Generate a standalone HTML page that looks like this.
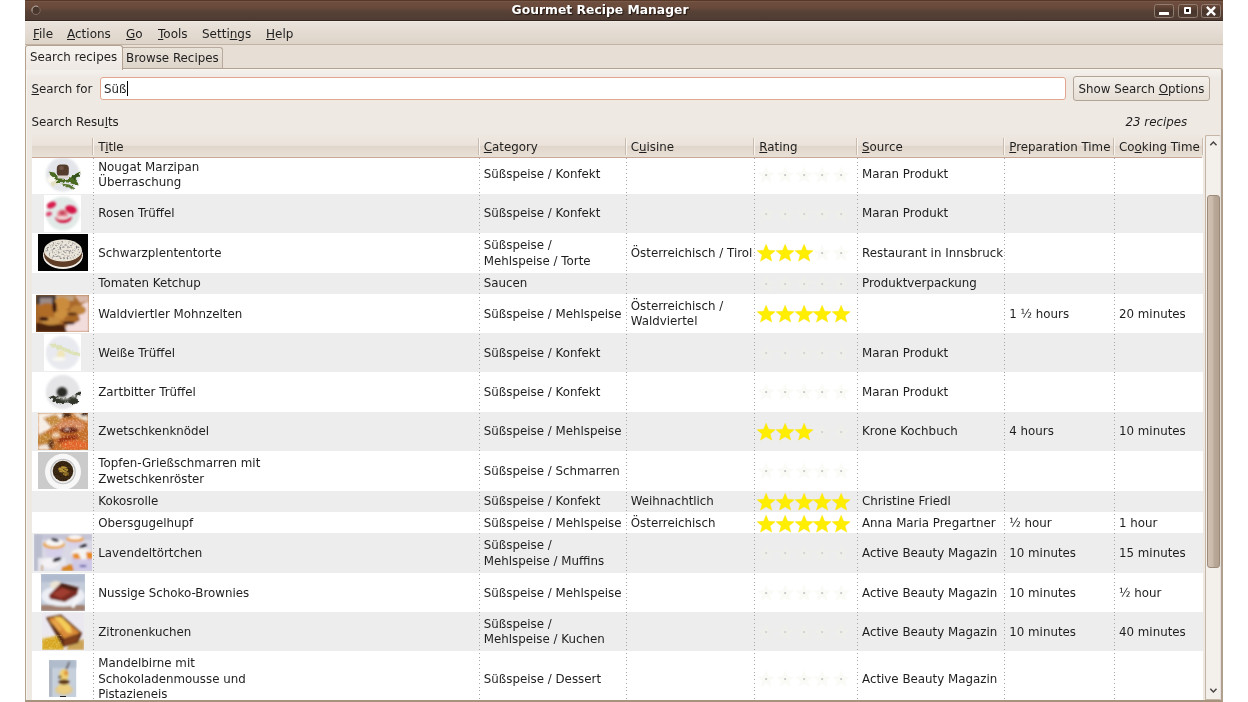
<!DOCTYPE html>
<html><head><meta charset="utf-8"><title>Gourmet Recipe Manager</title>
<style>
*{box-sizing:border-box;margin:0;padding:0}
html,body{width:1248px;height:702px;overflow:hidden;background:#fff}
body{font-family:"DejaVu Sans","Liberation Sans",sans-serif;font-size:11.85px;color:#1e1e1e;position:relative;-webkit-font-smoothing:antialiased}
#all{left:0;top:0;width:1248px;height:702px;will-change:transform}
u{text-decoration:underline;text-underline-offset:1px;text-decoration-thickness:1px}
div,span,svg{position:absolute}
#titlebar{left:25px;top:0;width:1198px;height:21px;background:linear-gradient(#573828 0,#573828 1px,#7b5b49 1px,#6d4e3e 2.5px,#69493a 8px,#584237 11px,#4f3c33 19.5px,#35261f 20px,#35261f 21px)}
#title{left:486.6px;top:2.5px;white-space:nowrap;font-size:12.35px;color:#fff;font-weight:bold;text-shadow:1px 1px 1px #1e130d;line-height:15px}
#menubar{left:25px;top:21px;width:1198px;height:24px;background:linear-gradient(#f3eee9 0,#eae3db 1.5px,#ddd3c8);border-bottom:1px solid #c3b3a3}
#menubar span{top:5.5px;line-height:15px;font-size:12px}
#tabstrip{left:25px;top:45px;width:1198px;height:24px;background:#e7dfd5}
#page{left:25px;top:68px;width:1198px;height:634px;background:linear-gradient(#f5f2ee 0,#efe9e4 9px);border:1px solid #b3a291;box-shadow:inset 1px 1px 0 #f8f5f1;border-right:2px solid #b09f8c;border-bottom:2.2px solid #a6937d;border-radius:0 3px 0 0}
#tab1{left:25px;top:45px;width:98px;height:25px;background:linear-gradient(#f6f3ef,#efe9e4);border:1px solid #b3a291;border-bottom:none;border-radius:3px 3px 0 0}
#tab2{left:122px;top:47px;width:101px;height:21px;background:linear-gradient(#e9e2d9,#ded5ca);border:1px solid #b9aa9b;border-left:none;border-bottom:none;border-radius:0 3px 0 0}
.wb{top:4px;width:20px;height:14px;border:1px solid #8f7b70;border-radius:2.5px;background:linear-gradient(#6a4a3a,#47342b 55%,#503c32)}
.tl{line-height:15px;white-space:nowrap}
#entry{left:100px;top:77px;width:966px;height:23px;background:#fff;border:1px solid #e2a68e;border-radius:3px}
#btn{left:1073px;top:76px;width:137px;height:25px;border:1px solid #b3a596;border-radius:3px;background:linear-gradient(#f4f0eb,#e6ded5)}
#thead{z-index:3;left:32px;top:135px;width:1170px;height:23px;background:linear-gradient(#eee8e1 0,#ebe3db 46%,#e1d6cb 52%,#e9e0d7 100%);border-bottom:1px solid #c9a796}
.hs{top:3px;width:2px;height:17px;border-left:1px solid #c9bcae;border-right:1px solid #f8f5f1}
.ht{top:5px;line-height:15px;white-space:nowrap}
#tbody{left:32px;top:158px;width:1170.5px;height:542px;background:#fff}
.rg{left:32px;width:1170.5px;background:#ededed}
.c{line-height:15.5px;white-space:nowrap}
.vl{top:158px;width:1px;height:542px;background:repeating-linear-gradient(#a6a6a6 0,#a6a6a6 1px,transparent 1px,transparent 3.75px)}
#sbar{left:1204.7px;top:135px;width:16.6px;height:565px;background:#f3efea;border:1px solid #c6b6a6;border-right-color:#e6e1dc;border-radius:2px 2px 0 0}
#thumb{left:1207px;top:195px;width:13px;height:373px;border:1px solid #9c8b7b;border-radius:3px;background:linear-gradient(90deg,#d0c1b3 0,#c9b9aa 46%,#b9a999 54%,#b3a292 100%)}
</style></head><body>
<svg width="0" height="0" style="position:absolute"><defs>
<filter id="b0" x="-20%" y="-20%" width="140%" height="140%"><feGaussianBlur stdDeviation="0.45"/></filter>
<filter id="b1" x="-20%" y="-20%" width="140%" height="140%"><feGaussianBlur stdDeviation="0.8"/></filter>
<filter id="b2" x="-20%" y="-20%" width="140%" height="140%"><feGaussianBlur stdDeviation="1.1"/></filter>
<filter id="b3" x="-20%" y="-20%" width="140%" height="140%"><feGaussianBlur stdDeviation="2"/></filter>
<filter id="rg" x="-20%" y="-20%" width="140%" height="140%"><feTurbulence type="fractalNoise" baseFrequency="0.35" numOctaves="2" seed="7" result="t"/><feDisplacementMap in="SourceGraphic" in2="t" scale="3.2" xChannelSelector="R" yChannelSelector="G"/><feGaussianBlur stdDeviation="0.55"/></filter>
<filter id="sp" x="0" y="0" width="100%" height="100%"><feTurbulence type="fractalNoise" baseFrequency="0.55" numOctaves="2" seed="3" result="n"/><feColorMatrix in="n" type="matrix" values="0 0 0 0 0  0 0 0 0 0  0 0 0 0 0  2.2 0 0 0 -1.05" result="m"/><feComposite in="SourceGraphic" in2="m" operator="in"/><feGaussianBlur stdDeviation="0.35"/></filter>
</defs></svg>
<div id="all">
<div id="titlebar"><div id="title">Gourmet Recipe Manager</div>
<svg style="left:5px;top:4px" width="13" height="13" viewBox="0 0 13 13"><circle cx="6" cy="6.3" r="4.2" fill="#49362d" stroke="#7f6b5f" stroke-width="1"/><path d="M2.2 7.5 A4 4 0 0 1 8 2.6" fill="none" stroke="#b3a59b" stroke-width="1"/></svg>
<div class="wb" style="left:1129px"></div><div class="wb" style="left:1153px"></div><div class="wb" style="left:1176px"></div>
<div style="left:1134px;top:11.5px;width:10px;height:3px;background:#fff;border-radius:.5px"></div>
<div style="left:1159px;top:7px;width:7px;height:6.5px;border:2px solid #fff;border-top-width:2.5px;border-radius:1px;background:#1a100c"></div>
<svg style="left:1181px;top:5.5px" width="10" height="10" viewBox="0 0 10 10"><path d="M1.8 1.8 L8.2 8.2 M8.2 1.8 L1.8 8.2" stroke="#fff" stroke-width="2.4" stroke-linecap="square"/></svg>
</div>
<div id="menubar">
  <span style="left:8px"><u>F</u>ile</span>
  <span style="left:42px"><u>A</u>ctions</span>
  <span style="left:101px"><u>G</u>o</span>
  <span style="left:133px"><u>T</u>ools</span>
  <span style="left:177px">Setti<u>n</u>gs</span>
  <span style="left:241px"><u>H</u>elp</span>
</div>
<div id="tabstrip"></div>
<div id="page"></div>
<div id="tab2"></div>
<div id="tab1"></div>
<div class="tl" style="left:30px;top:50px">Search recipes</div>
<div class="tl" style="left:126px;top:51px">Browse Recipes</div>
<div class="tl" style="left:31.5px;top:82px"><u>S</u>earch for</div>
<div id="entry"></div>
<div class="tl" style="left:104px;top:82px">Süß</div>
<div style="left:127.2px;top:80.7px;width:1px;height:15.5px;background:#000"></div>
<div id="btn"></div>
<div class="tl" style="left:1078.5px;top:82px">Show Search <u>O</u>ptions</div>
<div class="tl" style="left:31.5px;top:114.5px">Search Resu<u>l</u>ts</div>
<div class="tl" style="left:1125.5px;top:114.5px;font-style:italic">23 recipes</div>
<div id="thead">
<div class="hs" style="left:60.25px"></div>
<div class="hs" style="left:445.75px"></div>
<div class="hs" style="left:592.75px"></div>
<div class="hs" style="left:721.25px"></div>
<div class="hs" style="left:824px"></div>
<div class="hs" style="left:971.25px"></div>
<div class="hs" style="left:1081px"></div>
<div class="hs" style="left:1169.5px"></div>
<div class="ht" style="left:66.25px">T<u>i</u>tle</div>
<div class="ht" style="left:451.75px"><u>C</u>ategory</div>
<div class="ht" style="left:598.75px">C<u>u</u>isine</div>
<div class="ht" style="left:727.25px"><u>R</u>ating</div>
<div class="ht" style="left:830.00px"><u>S</u>ource</div>
<div class="ht" style="left:977.25px"><u>P</u>reparation Time</div>
<div class="ht" style="left:1087.00px">Co<u>o</u>king Time</div>
</div>
<div id="tbody"></div>
<svg style="left:44px;top:157.07px" width="37" height="37" viewBox="0 0 37 37">
<rect width="37" height="37" fill="#fff"/>
<circle cx="18.8" cy="17.5" r="17" fill="#e4e5ea" filter="url(#b1)"/>
<ellipse cx="9.5" cy="23" rx="7" ry="4.5" fill="#f8f6ee" filter="url(#b2)"/>
<g filter="url(#rg)" transform="translate(1.3 1.6)">
<path d="M3 13 L9 14 L14 19 L22 21.5 L29 16 L35 13 L35 16 L30 20 L34 25 L32 27 L23 24 L14 23.5 L8 27 L6 26 L11 21.5 L5 16.5 Z" fill="#4c6a24"/>
<path d="M26 18.5 L34 14 L35 17 L29 21 Z" fill="#35521a"/>
<path d="M5 24 L11 22 L13 26 L7 28 Z" fill="#e4e0c4"/>
<path d="M16 25 L24 26 L30 30 L28 31 L20 28 Z" fill="#5a7830"/>
</g>
<g filter="url(#b0)">
<rect x="12.8" y="7.5" width="12" height="12" rx="4" fill="#553c2e"/>
<rect x="15" y="9" width="5" height="4" rx="2" fill="#6e5444"/>
<rect x="13.5" y="18.6" width="11" height="2.8" rx="1" fill="#dcd4d0"/>
</g></svg>
<div class="c" style="left:98.25px;top:159.68px">Nougat Marzipan<br>Überraschung</div>
<div class="c" style="left:483.75px;top:167.43px">Süßspeise / Konfekt</div>
<svg class="st" style="left:756.10px;top:164.97px" width="20.25" height="19.9" viewBox="0 0 18 18" preserveAspectRatio="none"><path d="M9 1.2 L11.2 6.6 L17 7 L12.5 10.8 L14 16.4 L9 13.3 L4 16.4 L5.5 10.8 L1 7 L6.8 6.6 Z" fill="#fafaf6"/><circle cx="9" cy="9.1" r="1.05" fill="#c8c8c8"/></svg><svg class="st" style="left:774.82px;top:164.97px" width="20.25" height="19.9" viewBox="0 0 18 18" preserveAspectRatio="none"><path d="M9 1.2 L11.2 6.6 L17 7 L12.5 10.8 L14 16.4 L9 13.3 L4 16.4 L5.5 10.8 L1 7 L6.8 6.6 Z" fill="#fafaf6"/><circle cx="9" cy="9.1" r="1.05" fill="#c8c8c8"/></svg><svg class="st" style="left:793.54px;top:164.97px" width="20.25" height="19.9" viewBox="0 0 18 18" preserveAspectRatio="none"><path d="M9 1.2 L11.2 6.6 L17 7 L12.5 10.8 L14 16.4 L9 13.3 L4 16.4 L5.5 10.8 L1 7 L6.8 6.6 Z" fill="#fafaf6"/><circle cx="9" cy="9.1" r="1.05" fill="#c8c8c8"/></svg><svg class="st" style="left:812.26px;top:164.97px" width="20.25" height="19.9" viewBox="0 0 18 18" preserveAspectRatio="none"><path d="M9 1.2 L11.2 6.6 L17 7 L12.5 10.8 L14 16.4 L9 13.3 L4 16.4 L5.5 10.8 L1 7 L6.8 6.6 Z" fill="#fafaf6"/><circle cx="9" cy="9.1" r="1.05" fill="#c8c8c8"/></svg><svg class="st" style="left:830.98px;top:164.97px" width="20.25" height="19.9" viewBox="0 0 18 18" preserveAspectRatio="none"><path d="M9 1.2 L11.2 6.6 L17 7 L12.5 10.8 L14 16.4 L9 13.3 L4 16.4 L5.5 10.8 L1 7 L6.8 6.6 Z" fill="#fafaf6"/><circle cx="9" cy="9.1" r="1.05" fill="#c8c8c8"/></svg>
<div class="c" style="left:862.00px;top:167.43px">Maran Produkt</div>
<div class="rg" style="top:194px;height:38.900000000000006px"></div>
<svg style="left:44px;top:194.95px" width="37" height="37" viewBox="0 0 37 37">
<rect width="37" height="37" fill="#fff"/>
<circle cx="18.8" cy="18.5" r="17" fill="#e2eae8" filter="url(#b1)"/>
<g filter="url(#b1)">
<ellipse cx="7.5" cy="10" rx="4.8" ry="3" fill="#d81b4e" transform="rotate(-25 7.5 10)"/>
<ellipse cx="5" cy="19" rx="3" ry="2" fill="#e0406a" transform="rotate(-20 5 19)"/>
<ellipse cx="27" cy="14.5" rx="6" ry="4" fill="#d41848" transform="rotate(20 27 14.5)"/>
<path d="M11 22 Q12 28 20 28 Q28 27 28 21 Q24 25 18 24 Z" fill="#d01846"/>
<ellipse cx="18.5" cy="19.5" rx="5.5" ry="5" fill="#e88a98"/>
<ellipse cx="18.5" cy="18" rx="3" ry="2.4" fill="#c84a60"/>
<ellipse cx="18" cy="23" rx="5" ry="1.4" fill="#f4e4e4"/>
</g></svg>
<div class="c" style="left:98.25px;top:205.80px">Rosen Trüffel</div>
<div class="c" style="left:483.75px;top:205.80px">Süßspeise / Konfekt</div>
<svg class="st" style="left:756.10px;top:204.05px" width="20.25" height="19.9" viewBox="0 0 18 18" preserveAspectRatio="none"><path d="M9 1.2 L11.2 6.6 L17 7 L12.5 10.8 L14 16.4 L9 13.3 L4 16.4 L5.5 10.8 L1 7 L6.8 6.6 Z" fill="#eeeeeb"/><circle cx="9" cy="9.1" r="1.05" fill="#d2d2d2"/></svg><svg class="st" style="left:774.82px;top:204.05px" width="20.25" height="19.9" viewBox="0 0 18 18" preserveAspectRatio="none"><path d="M9 1.2 L11.2 6.6 L17 7 L12.5 10.8 L14 16.4 L9 13.3 L4 16.4 L5.5 10.8 L1 7 L6.8 6.6 Z" fill="#eeeeeb"/><circle cx="9" cy="9.1" r="1.05" fill="#d2d2d2"/></svg><svg class="st" style="left:793.54px;top:204.05px" width="20.25" height="19.9" viewBox="0 0 18 18" preserveAspectRatio="none"><path d="M9 1.2 L11.2 6.6 L17 7 L12.5 10.8 L14 16.4 L9 13.3 L4 16.4 L5.5 10.8 L1 7 L6.8 6.6 Z" fill="#eeeeeb"/><circle cx="9" cy="9.1" r="1.05" fill="#d2d2d2"/></svg><svg class="st" style="left:812.26px;top:204.05px" width="20.25" height="19.9" viewBox="0 0 18 18" preserveAspectRatio="none"><path d="M9 1.2 L11.2 6.6 L17 7 L12.5 10.8 L14 16.4 L9 13.3 L4 16.4 L5.5 10.8 L1 7 L6.8 6.6 Z" fill="#eeeeeb"/><circle cx="9" cy="9.1" r="1.05" fill="#d2d2d2"/></svg><svg class="st" style="left:830.98px;top:204.05px" width="20.25" height="19.9" viewBox="0 0 18 18" preserveAspectRatio="none"><path d="M9 1.2 L11.2 6.6 L17 7 L12.5 10.8 L14 16.4 L9 13.3 L4 16.4 L5.5 10.8 L1 7 L6.8 6.6 Z" fill="#eeeeeb"/><circle cx="9" cy="9.1" r="1.05" fill="#d2d2d2"/></svg>
<div class="c" style="left:862.00px;top:205.80px">Maran Produkt</div>
<svg style="left:38px;top:234.30px" width="50" height="37" viewBox="0 0 50 37">
<rect width="50" height="37" fill="#030303"/>
<g filter="url(#b0)">
<ellipse cx="25" cy="21.5" rx="20" ry="13.5" fill="#f2eeea"/>
<ellipse cx="25" cy="20.3" rx="19" ry="12.8" fill="#5e3e26"/>
<ellipse cx="25" cy="16.5" rx="19" ry="11" fill="#ece6da"/>
</g>
<ellipse cx="25" cy="16.5" rx="17.5" ry="9.8" fill="#5a5a68" filter="url(#sp)"/>
</svg>
<div class="c" style="left:98.25px;top:245.85px">Schwarzplententorte</div>
<div class="c" style="left:483.75px;top:238.10px">Süßspeise /<br>Mehlspeise / Torte</div>
<div class="c" style="left:630.75px;top:245.85px">Österreichisch / Tirol</div>
<svg class="st" style="left:756.10px;top:243.40px" width="20.25" height="19.9" viewBox="0 0 18 18" preserveAspectRatio="none"><path d="M9 1.2 L11.2 6.6 L17 7 L12.5 10.8 L14 16.4 L9 13.3 L4 16.4 L5.5 10.8 L1 7 L6.8 6.6 Z" fill="#ffee00" stroke="#ffe200" stroke-width=".4"/></svg><svg class="st" style="left:774.82px;top:243.40px" width="20.25" height="19.9" viewBox="0 0 18 18" preserveAspectRatio="none"><path d="M9 1.2 L11.2 6.6 L17 7 L12.5 10.8 L14 16.4 L9 13.3 L4 16.4 L5.5 10.8 L1 7 L6.8 6.6 Z" fill="#ffee00" stroke="#ffe200" stroke-width=".4"/></svg><svg class="st" style="left:793.54px;top:243.40px" width="20.25" height="19.9" viewBox="0 0 18 18" preserveAspectRatio="none"><path d="M9 1.2 L11.2 6.6 L17 7 L12.5 10.8 L14 16.4 L9 13.3 L4 16.4 L5.5 10.8 L1 7 L6.8 6.6 Z" fill="#ffee00" stroke="#ffe200" stroke-width=".4"/></svg><svg class="st" style="left:812.26px;top:243.40px" width="20.25" height="19.9" viewBox="0 0 18 18" preserveAspectRatio="none"><path d="M9 1.2 L11.2 6.6 L17 7 L12.5 10.8 L14 16.4 L9 13.3 L4 16.4 L5.5 10.8 L1 7 L6.8 6.6 Z" fill="#fafaf6"/><circle cx="9" cy="9.1" r="1.05" fill="#c8c8c8"/></svg><svg class="st" style="left:830.98px;top:243.40px" width="20.25" height="19.9" viewBox="0 0 18 18" preserveAspectRatio="none"><path d="M9 1.2 L11.2 6.6 L17 7 L12.5 10.8 L14 16.4 L9 13.3 L4 16.4 L5.5 10.8 L1 7 L6.8 6.6 Z" fill="#fafaf6"/><circle cx="9" cy="9.1" r="1.05" fill="#c8c8c8"/></svg>
<div class="c" style="left:862.00px;top:245.85px">Restaurant in Innsbruck</div>
<div class="rg" style="top:272.7px;height:21.30000000000001px"></div>
<div class="c" style="left:98.25px;top:276.40px">Tomaten Ketchup</div>
<div class="c" style="left:483.75px;top:276.40px">Saucen</div>
<svg class="st" style="left:756.10px;top:273.95px" width="20.25" height="19.9" viewBox="0 0 18 18" preserveAspectRatio="none"><path d="M9 1.2 L11.2 6.6 L17 7 L12.5 10.8 L14 16.4 L9 13.3 L4 16.4 L5.5 10.8 L1 7 L6.8 6.6 Z" fill="#eeeeeb"/><circle cx="9" cy="9.1" r="1.05" fill="#d2d2d2"/></svg><svg class="st" style="left:774.82px;top:273.95px" width="20.25" height="19.9" viewBox="0 0 18 18" preserveAspectRatio="none"><path d="M9 1.2 L11.2 6.6 L17 7 L12.5 10.8 L14 16.4 L9 13.3 L4 16.4 L5.5 10.8 L1 7 L6.8 6.6 Z" fill="#eeeeeb"/><circle cx="9" cy="9.1" r="1.05" fill="#d2d2d2"/></svg><svg class="st" style="left:793.54px;top:273.95px" width="20.25" height="19.9" viewBox="0 0 18 18" preserveAspectRatio="none"><path d="M9 1.2 L11.2 6.6 L17 7 L12.5 10.8 L14 16.4 L9 13.3 L4 16.4 L5.5 10.8 L1 7 L6.8 6.6 Z" fill="#eeeeeb"/><circle cx="9" cy="9.1" r="1.05" fill="#d2d2d2"/></svg><svg class="st" style="left:812.26px;top:273.95px" width="20.25" height="19.9" viewBox="0 0 18 18" preserveAspectRatio="none"><path d="M9 1.2 L11.2 6.6 L17 7 L12.5 10.8 L14 16.4 L9 13.3 L4 16.4 L5.5 10.8 L1 7 L6.8 6.6 Z" fill="#eeeeeb"/><circle cx="9" cy="9.1" r="1.05" fill="#d2d2d2"/></svg><svg class="st" style="left:830.98px;top:273.95px" width="20.25" height="19.9" viewBox="0 0 18 18" preserveAspectRatio="none"><path d="M9 1.2 L11.2 6.6 L17 7 L12.5 10.8 L14 16.4 L9 13.3 L4 16.4 L5.5 10.8 L1 7 L6.8 6.6 Z" fill="#eeeeeb"/><circle cx="9" cy="9.1" r="1.05" fill="#d2d2d2"/></svg>
<div class="c" style="left:862.00px;top:276.40px">Produktverpackung</div>
<svg style="left:36px;top:295.00px" width="53" height="37" viewBox="0 0 53 37">
<rect width="53" height="37" fill="#a8682a"/>
<g filter="url(#b2)">
<rect x="0" y="0" width="22" height="9" fill="#4a3c38"/>
<rect x="4" y="3" width="12" height="8" fill="#9a8a88"/>
<rect x="20" y="0" width="18" height="6" fill="#c0a080"/>
<path d="M46 9 L53 6 L53 37 L27 37 L31 30 L42 23 Z" fill="#f2dcdc"/><path d="M38 0 L53 0 L53 6 L44 8 Z" fill="#d8b8a8"/>
<path d="M0 28 L28 30 L31 37 L0 37 Z" fill="#4a2008"/>
<ellipse cx="26" cy="9" rx="8" ry="7" fill="#cc8c3c"/>
<ellipse cx="11" cy="15" rx="9" ry="7" fill="#b06c28"/>
<ellipse cx="42" cy="15" rx="8" ry="5" fill="#c0843a"/>
<ellipse cx="27" cy="20" rx="9" ry="5" fill="#cc9040"/>
<ellipse cx="15" cy="26" rx="10" ry="4" fill="#c48a3c"/>
<ellipse cx="36" cy="24" rx="8" ry="4" fill="#a86828"/>
<ellipse cx="18.5" cy="12" rx="2.2" ry="5.5" fill="#3a1810"/>
<ellipse cx="8" cy="24" rx="4.5" ry="2" fill="#3a1810"/>
<ellipse cx="33" cy="28" rx="6" ry="1.6" fill="#3a1810"/>
<ellipse cx="36" cy="19" rx="5" ry="1.4" fill="#5a2c14"/>
</g></svg>
<div class="c" style="left:98.25px;top:306.55px">Waldviertler Mohnzelten</div>
<div class="c" style="left:483.75px;top:306.55px">Süßspeise / Mehlspeise</div>
<div class="c" style="left:630.75px;top:298.80px">Österreichisch /<br>Waldviertel</div>
<svg class="st" style="left:756.10px;top:304.10px" width="20.25" height="19.9" viewBox="0 0 18 18" preserveAspectRatio="none"><path d="M9 1.2 L11.2 6.6 L17 7 L12.5 10.8 L14 16.4 L9 13.3 L4 16.4 L5.5 10.8 L1 7 L6.8 6.6 Z" fill="#ffee00" stroke="#ffe200" stroke-width=".4"/></svg><svg class="st" style="left:774.82px;top:304.10px" width="20.25" height="19.9" viewBox="0 0 18 18" preserveAspectRatio="none"><path d="M9 1.2 L11.2 6.6 L17 7 L12.5 10.8 L14 16.4 L9 13.3 L4 16.4 L5.5 10.8 L1 7 L6.8 6.6 Z" fill="#ffee00" stroke="#ffe200" stroke-width=".4"/></svg><svg class="st" style="left:793.54px;top:304.10px" width="20.25" height="19.9" viewBox="0 0 18 18" preserveAspectRatio="none"><path d="M9 1.2 L11.2 6.6 L17 7 L12.5 10.8 L14 16.4 L9 13.3 L4 16.4 L5.5 10.8 L1 7 L6.8 6.6 Z" fill="#ffee00" stroke="#ffe200" stroke-width=".4"/></svg><svg class="st" style="left:812.26px;top:304.10px" width="20.25" height="19.9" viewBox="0 0 18 18" preserveAspectRatio="none"><path d="M9 1.2 L11.2 6.6 L17 7 L12.5 10.8 L14 16.4 L9 13.3 L4 16.4 L5.5 10.8 L1 7 L6.8 6.6 Z" fill="#ffee00" stroke="#ffe200" stroke-width=".4"/></svg><svg class="st" style="left:830.98px;top:304.10px" width="20.25" height="19.9" viewBox="0 0 18 18" preserveAspectRatio="none"><path d="M9 1.2 L11.2 6.6 L17 7 L12.5 10.8 L14 16.4 L9 13.3 L4 16.4 L5.5 10.8 L1 7 L6.8 6.6 Z" fill="#ffee00" stroke="#ffe200" stroke-width=".4"/></svg>
<div class="c" style="left:1009.25px;top:306.55px">1 ½ hours</div>
<div class="c" style="left:1119.00px;top:306.55px">20 minutes</div>
<div class="rg" style="top:333px;height:39px"></div>
<svg style="left:44px;top:334.00px" width="37" height="37" viewBox="0 0 37 37">
<rect width="37" height="37" fill="#fff"/>
<circle cx="18.8" cy="18.8" r="17" fill="#e9eaef" filter="url(#b1)"/>
<g filter="url(#rg)" transform="translate(1.3 1.6)">
<path d="M4 8.5 L10 8 L20 12.5 L34 17.5 L35 21 L28 19.5 L18 15.5 L6 12 Z" fill="#dde2b8"/>
</g>
<g filter="url(#b2)">
<ellipse cx="17" cy="20.5" rx="4" ry="4.5" fill="#f0e6b8"/>
<ellipse cx="15" cy="25" rx="7" ry="2.2" fill="#f8f7f2"/>
</g></svg>
<div class="c" style="left:98.25px;top:345.55px">Weiße Trüffel</div>
<div class="c" style="left:483.75px;top:345.55px">Süßspeise / Konfekt</div>
<svg class="st" style="left:756.10px;top:343.10px" width="20.25" height="19.9" viewBox="0 0 18 18" preserveAspectRatio="none"><path d="M9 1.2 L11.2 6.6 L17 7 L12.5 10.8 L14 16.4 L9 13.3 L4 16.4 L5.5 10.8 L1 7 L6.8 6.6 Z" fill="#eeeeeb"/><circle cx="9" cy="9.1" r="1.05" fill="#d2d2d2"/></svg><svg class="st" style="left:774.82px;top:343.10px" width="20.25" height="19.9" viewBox="0 0 18 18" preserveAspectRatio="none"><path d="M9 1.2 L11.2 6.6 L17 7 L12.5 10.8 L14 16.4 L9 13.3 L4 16.4 L5.5 10.8 L1 7 L6.8 6.6 Z" fill="#eeeeeb"/><circle cx="9" cy="9.1" r="1.05" fill="#d2d2d2"/></svg><svg class="st" style="left:793.54px;top:343.10px" width="20.25" height="19.9" viewBox="0 0 18 18" preserveAspectRatio="none"><path d="M9 1.2 L11.2 6.6 L17 7 L12.5 10.8 L14 16.4 L9 13.3 L4 16.4 L5.5 10.8 L1 7 L6.8 6.6 Z" fill="#eeeeeb"/><circle cx="9" cy="9.1" r="1.05" fill="#d2d2d2"/></svg><svg class="st" style="left:812.26px;top:343.10px" width="20.25" height="19.9" viewBox="0 0 18 18" preserveAspectRatio="none"><path d="M9 1.2 L11.2 6.6 L17 7 L12.5 10.8 L14 16.4 L9 13.3 L4 16.4 L5.5 10.8 L1 7 L6.8 6.6 Z" fill="#eeeeeb"/><circle cx="9" cy="9.1" r="1.05" fill="#d2d2d2"/></svg><svg class="st" style="left:830.98px;top:343.10px" width="20.25" height="19.9" viewBox="0 0 18 18" preserveAspectRatio="none"><path d="M9 1.2 L11.2 6.6 L17 7 L12.5 10.8 L14 16.4 L9 13.3 L4 16.4 L5.5 10.8 L1 7 L6.8 6.6 Z" fill="#eeeeeb"/><circle cx="9" cy="9.1" r="1.05" fill="#d2d2d2"/></svg>
<div class="c" style="left:862.00px;top:345.55px">Maran Produkt</div>
<svg style="left:44px;top:373.38px" width="37" height="37" viewBox="0 0 37 37">
<rect width="37" height="37" fill="#fff"/>
<circle cx="18.8" cy="19" r="17" fill="#e5e5e8" filter="url(#b1)"/>
<g filter="url(#rg)" transform="translate(1.3 1.6)">
<path d="M3 23 L8 21 L12 23 L22 24 L28 21 L34 17 L36 19 L32 23 L33 28 L28 30 L22 28 L12 29 L7 27 L8 24 Z" fill="#30342a"/>
</g>
<g filter="url(#b1)">
<ellipse cx="18" cy="19.3" rx="5.3" ry="5.3" fill="#2a2a26"/>
<ellipse cx="21" cy="25.5" rx="5" ry="1" fill="#d8d8d4"/>
<ellipse cx="30" cy="23" rx="3" ry="1.2" fill="#e8e8e6"/>
</g></svg>
<div class="c" style="left:98.25px;top:384.93px">Zartbitter Trüffel</div>
<div class="c" style="left:483.75px;top:384.93px">Süßspeise / Konfekt</div>
<svg class="st" style="left:756.10px;top:382.48px" width="20.25" height="19.9" viewBox="0 0 18 18" preserveAspectRatio="none"><path d="M9 1.2 L11.2 6.6 L17 7 L12.5 10.8 L14 16.4 L9 13.3 L4 16.4 L5.5 10.8 L1 7 L6.8 6.6 Z" fill="#fafaf6"/><circle cx="9" cy="9.1" r="1.05" fill="#c8c8c8"/></svg><svg class="st" style="left:774.82px;top:382.48px" width="20.25" height="19.9" viewBox="0 0 18 18" preserveAspectRatio="none"><path d="M9 1.2 L11.2 6.6 L17 7 L12.5 10.8 L14 16.4 L9 13.3 L4 16.4 L5.5 10.8 L1 7 L6.8 6.6 Z" fill="#fafaf6"/><circle cx="9" cy="9.1" r="1.05" fill="#c8c8c8"/></svg><svg class="st" style="left:793.54px;top:382.48px" width="20.25" height="19.9" viewBox="0 0 18 18" preserveAspectRatio="none"><path d="M9 1.2 L11.2 6.6 L17 7 L12.5 10.8 L14 16.4 L9 13.3 L4 16.4 L5.5 10.8 L1 7 L6.8 6.6 Z" fill="#fafaf6"/><circle cx="9" cy="9.1" r="1.05" fill="#c8c8c8"/></svg><svg class="st" style="left:812.26px;top:382.48px" width="20.25" height="19.9" viewBox="0 0 18 18" preserveAspectRatio="none"><path d="M9 1.2 L11.2 6.6 L17 7 L12.5 10.8 L14 16.4 L9 13.3 L4 16.4 L5.5 10.8 L1 7 L6.8 6.6 Z" fill="#fafaf6"/><circle cx="9" cy="9.1" r="1.05" fill="#c8c8c8"/></svg><svg class="st" style="left:830.98px;top:382.48px" width="20.25" height="19.9" viewBox="0 0 18 18" preserveAspectRatio="none"><path d="M9 1.2 L11.2 6.6 L17 7 L12.5 10.8 L14 16.4 L9 13.3 L4 16.4 L5.5 10.8 L1 7 L6.8 6.6 Z" fill="#fafaf6"/><circle cx="9" cy="9.1" r="1.05" fill="#c8c8c8"/></svg>
<div class="c" style="left:862.00px;top:384.93px">Maran Produkt</div>
<div class="rg" style="top:411.75px;height:39.25px"></div>
<svg style="left:38px;top:412.88px" width="50" height="37" viewBox="0 0 50 37">
<rect width="50" height="37" fill="#c4702c"/>
<g filter="url(#b2)">
<path d="M0 0 L26 0 L22 9 L10 17 L0 22 Z" fill="#f6eee6"/>
<path d="M34 0 L50 0 L50 9 L42 6 Z" fill="#eadccc"/>
<rect x="43" y="0" width="7" height="3" fill="#201008"/>
<rect x="24" y="0" width="9" height="4" fill="#4a2c18"/>
<path d="M5 5 L18 1 L24 8 L13 14 Z" fill="#c48a3c"/>
<ellipse cx="33" cy="13" rx="14" ry="6" fill="#d4885c"/>
<ellipse cx="31" cy="17" rx="9.5" ry="3" fill="#641a0e"/>
<ellipse cx="29" cy="16" rx="2" ry="1" fill="#f0d0c0"/>
<ellipse cx="30" cy="26" rx="11" ry="3.5" fill="#98300f" transform="rotate(-12 30 26)"/>
<ellipse cx="7" cy="27" rx="8" ry="7" fill="#c08434"/>
<ellipse cx="37" cy="32" rx="14" ry="5" fill="#e2662a"/>
<ellipse cx="13" cy="31" rx="3" ry="5" fill="#6a3818"/>
<path d="M0 33 L9 31 L12 37 L0 37 Z" fill="#f0e4d8"/>
<ellipse cx="18" cy="22" rx="4" ry="3" fill="#e8c8a8"/>
</g>
<rect width="50" height="37" fill="#fff0dc" filter="url(#sp)" opacity=".55"/>
</svg>
<div class="c" style="left:98.25px;top:424.43px">Zwetschkenknödel</div>
<div class="c" style="left:483.75px;top:424.43px">Süßspeise / Mehlspeise</div>
<svg class="st" style="left:756.10px;top:421.98px" width="20.25" height="19.9" viewBox="0 0 18 18" preserveAspectRatio="none"><path d="M9 1.2 L11.2 6.6 L17 7 L12.5 10.8 L14 16.4 L9 13.3 L4 16.4 L5.5 10.8 L1 7 L6.8 6.6 Z" fill="#ffee00" stroke="#ffe200" stroke-width=".4"/></svg><svg class="st" style="left:774.82px;top:421.98px" width="20.25" height="19.9" viewBox="0 0 18 18" preserveAspectRatio="none"><path d="M9 1.2 L11.2 6.6 L17 7 L12.5 10.8 L14 16.4 L9 13.3 L4 16.4 L5.5 10.8 L1 7 L6.8 6.6 Z" fill="#ffee00" stroke="#ffe200" stroke-width=".4"/></svg><svg class="st" style="left:793.54px;top:421.98px" width="20.25" height="19.9" viewBox="0 0 18 18" preserveAspectRatio="none"><path d="M9 1.2 L11.2 6.6 L17 7 L12.5 10.8 L14 16.4 L9 13.3 L4 16.4 L5.5 10.8 L1 7 L6.8 6.6 Z" fill="#ffee00" stroke="#ffe200" stroke-width=".4"/></svg><svg class="st" style="left:812.26px;top:421.98px" width="20.25" height="19.9" viewBox="0 0 18 18" preserveAspectRatio="none"><path d="M9 1.2 L11.2 6.6 L17 7 L12.5 10.8 L14 16.4 L9 13.3 L4 16.4 L5.5 10.8 L1 7 L6.8 6.6 Z" fill="#eeeeeb"/><circle cx="9" cy="9.1" r="1.05" fill="#d2d2d2"/></svg><svg class="st" style="left:830.98px;top:421.98px" width="20.25" height="19.9" viewBox="0 0 18 18" preserveAspectRatio="none"><path d="M9 1.2 L11.2 6.6 L17 7 L12.5 10.8 L14 16.4 L9 13.3 L4 16.4 L5.5 10.8 L1 7 L6.8 6.6 Z" fill="#eeeeeb"/><circle cx="9" cy="9.1" r="1.05" fill="#d2d2d2"/></svg>
<div class="c" style="left:862.00px;top:424.43px">Krone Kochbuch</div>
<div class="c" style="left:1009.25px;top:424.43px">4 hours</div>
<div class="c" style="left:1119.00px;top:424.43px">10 minutes</div>
<svg style="left:38px;top:452.25px" width="50" height="37" viewBox="0 0 50 37">
<rect width="50" height="37" fill="#cbcbcb"/>
<g filter="url(#b0)">
<circle cx="25" cy="19.8" r="18" fill="#f7f7f7"/>
<circle cx="25" cy="19.5" r="12.8" fill="#c2c2c2"/>
<circle cx="25" cy="19.6" r="11.6" fill="#ececec"/>
<circle cx="25" cy="19" r="10.3" fill="#3c2a12"/>
<ellipse cx="25" cy="17.5" rx="5" ry="3.2" fill="#b89438"/>
<ellipse cx="28" cy="22" rx="3" ry="2" fill="#98782c"/>
</g>
<circle cx="25" cy="19" r="9.8" fill="#20120a" filter="url(#sp)"/>
</svg>
<div class="c" style="left:98.25px;top:456.05px">Topfen-Grießschmarren mit<br>Zwetschkenröster</div>
<div class="c" style="left:483.75px;top:463.80px">Süßspeise / Schmarren</div>
<svg class="st" style="left:756.10px;top:461.35px" width="20.25" height="19.9" viewBox="0 0 18 18" preserveAspectRatio="none"><path d="M9 1.2 L11.2 6.6 L17 7 L12.5 10.8 L14 16.4 L9 13.3 L4 16.4 L5.5 10.8 L1 7 L6.8 6.6 Z" fill="#fafaf6"/><circle cx="9" cy="9.1" r="1.05" fill="#c8c8c8"/></svg><svg class="st" style="left:774.82px;top:461.35px" width="20.25" height="19.9" viewBox="0 0 18 18" preserveAspectRatio="none"><path d="M9 1.2 L11.2 6.6 L17 7 L12.5 10.8 L14 16.4 L9 13.3 L4 16.4 L5.5 10.8 L1 7 L6.8 6.6 Z" fill="#fafaf6"/><circle cx="9" cy="9.1" r="1.05" fill="#c8c8c8"/></svg><svg class="st" style="left:793.54px;top:461.35px" width="20.25" height="19.9" viewBox="0 0 18 18" preserveAspectRatio="none"><path d="M9 1.2 L11.2 6.6 L17 7 L12.5 10.8 L14 16.4 L9 13.3 L4 16.4 L5.5 10.8 L1 7 L6.8 6.6 Z" fill="#fafaf6"/><circle cx="9" cy="9.1" r="1.05" fill="#c8c8c8"/></svg><svg class="st" style="left:812.26px;top:461.35px" width="20.25" height="19.9" viewBox="0 0 18 18" preserveAspectRatio="none"><path d="M9 1.2 L11.2 6.6 L17 7 L12.5 10.8 L14 16.4 L9 13.3 L4 16.4 L5.5 10.8 L1 7 L6.8 6.6 Z" fill="#fafaf6"/><circle cx="9" cy="9.1" r="1.05" fill="#c8c8c8"/></svg><svg class="st" style="left:830.98px;top:461.35px" width="20.25" height="19.9" viewBox="0 0 18 18" preserveAspectRatio="none"><path d="M9 1.2 L11.2 6.6 L17 7 L12.5 10.8 L14 16.4 L9 13.3 L4 16.4 L5.5 10.8 L1 7 L6.8 6.6 Z" fill="#fafaf6"/><circle cx="9" cy="9.1" r="1.05" fill="#c8c8c8"/></svg>
<div class="rg" style="top:490.5px;height:21.25px"></div>
<div class="c" style="left:98.25px;top:494.18px">Kokosrolle</div>
<div class="c" style="left:483.75px;top:494.18px">Süßspeise / Konfekt</div>
<div class="c" style="left:630.75px;top:494.18px">Weihnachtlich</div>
<svg class="st" style="left:756.10px;top:491.73px" width="20.25" height="19.9" viewBox="0 0 18 18" preserveAspectRatio="none"><path d="M9 1.2 L11.2 6.6 L17 7 L12.5 10.8 L14 16.4 L9 13.3 L4 16.4 L5.5 10.8 L1 7 L6.8 6.6 Z" fill="#ffee00" stroke="#ffe200" stroke-width=".4"/></svg><svg class="st" style="left:774.82px;top:491.73px" width="20.25" height="19.9" viewBox="0 0 18 18" preserveAspectRatio="none"><path d="M9 1.2 L11.2 6.6 L17 7 L12.5 10.8 L14 16.4 L9 13.3 L4 16.4 L5.5 10.8 L1 7 L6.8 6.6 Z" fill="#ffee00" stroke="#ffe200" stroke-width=".4"/></svg><svg class="st" style="left:793.54px;top:491.73px" width="20.25" height="19.9" viewBox="0 0 18 18" preserveAspectRatio="none"><path d="M9 1.2 L11.2 6.6 L17 7 L12.5 10.8 L14 16.4 L9 13.3 L4 16.4 L5.5 10.8 L1 7 L6.8 6.6 Z" fill="#ffee00" stroke="#ffe200" stroke-width=".4"/></svg><svg class="st" style="left:812.26px;top:491.73px" width="20.25" height="19.9" viewBox="0 0 18 18" preserveAspectRatio="none"><path d="M9 1.2 L11.2 6.6 L17 7 L12.5 10.8 L14 16.4 L9 13.3 L4 16.4 L5.5 10.8 L1 7 L6.8 6.6 Z" fill="#ffee00" stroke="#ffe200" stroke-width=".4"/></svg><svg class="st" style="left:830.98px;top:491.73px" width="20.25" height="19.9" viewBox="0 0 18 18" preserveAspectRatio="none"><path d="M9 1.2 L11.2 6.6 L17 7 L12.5 10.8 L14 16.4 L9 13.3 L4 16.4 L5.5 10.8 L1 7 L6.8 6.6 Z" fill="#ffee00" stroke="#ffe200" stroke-width=".4"/></svg>
<div class="c" style="left:862.00px;top:494.18px">Christine Friedl</div>
<div class="c" style="left:98.25px;top:516.30px">Obersgugelhupf</div>
<div class="c" style="left:483.75px;top:516.30px">Süßspeise / Mehlspeise</div>
<div class="c" style="left:630.75px;top:516.30px">Österreichisch</div>
<svg class="st" style="left:756.10px;top:513.85px" width="20.25" height="19.9" viewBox="0 0 18 18" preserveAspectRatio="none"><path d="M9 1.2 L11.2 6.6 L17 7 L12.5 10.8 L14 16.4 L9 13.3 L4 16.4 L5.5 10.8 L1 7 L6.8 6.6 Z" fill="#ffee00" stroke="#ffe200" stroke-width=".4"/></svg><svg class="st" style="left:774.82px;top:513.85px" width="20.25" height="19.9" viewBox="0 0 18 18" preserveAspectRatio="none"><path d="M9 1.2 L11.2 6.6 L17 7 L12.5 10.8 L14 16.4 L9 13.3 L4 16.4 L5.5 10.8 L1 7 L6.8 6.6 Z" fill="#ffee00" stroke="#ffe200" stroke-width=".4"/></svg><svg class="st" style="left:793.54px;top:513.85px" width="20.25" height="19.9" viewBox="0 0 18 18" preserveAspectRatio="none"><path d="M9 1.2 L11.2 6.6 L17 7 L12.5 10.8 L14 16.4 L9 13.3 L4 16.4 L5.5 10.8 L1 7 L6.8 6.6 Z" fill="#ffee00" stroke="#ffe200" stroke-width=".4"/></svg><svg class="st" style="left:812.26px;top:513.85px" width="20.25" height="19.9" viewBox="0 0 18 18" preserveAspectRatio="none"><path d="M9 1.2 L11.2 6.6 L17 7 L12.5 10.8 L14 16.4 L9 13.3 L4 16.4 L5.5 10.8 L1 7 L6.8 6.6 Z" fill="#ffee00" stroke="#ffe200" stroke-width=".4"/></svg><svg class="st" style="left:830.98px;top:513.85px" width="20.25" height="19.9" viewBox="0 0 18 18" preserveAspectRatio="none"><path d="M9 1.2 L11.2 6.6 L17 7 L12.5 10.8 L14 16.4 L9 13.3 L4 16.4 L5.5 10.8 L1 7 L6.8 6.6 Z" fill="#ffee00" stroke="#ffe200" stroke-width=".4"/></svg>
<div class="c" style="left:862.00px;top:516.30px">Anna Maria Pregartner</div>
<div class="c" style="left:1009.25px;top:516.30px">½ hour</div>
<div class="c" style="left:1119.00px;top:516.30px">1 hour</div>
<div class="rg" style="top:533px;height:39.5px"></div>
<svg style="left:33.6px;top:534.25px" width="58.6" height="37" viewBox="0 0 58.6 37">
<rect width="58.6" height="37" fill="#d9d8e4"/>
<g filter="url(#b2)">
<rect x="0" y="0" width="58.6" height="6" fill="#c4c4d6"/>
<rect x="0" y="0" width="8" height="37" fill="#b8bccc"/>
<rect x="4" y="24" width="28" height="13" fill="#e6e6ee"/>
<path d="M10 12 L30 12 L27 23 L13 23 Z" fill="#d6d0ea"/>
<ellipse cx="20" cy="10.5" rx="11" ry="4.6" fill="#e8a848"/>
<ellipse cx="20.5" cy="8.5" rx="9" ry="3.8" fill="#f8f6f6"/>
<path d="M33 6 L49 6 L46 13 L36 13 Z" fill="#d8d2ec"/>
<ellipse cx="41" cy="5" rx="9" ry="3.3" fill="#eca040"/>
<ellipse cx="41" cy="3.2" rx="7" ry="2.2" fill="#faf6f2"/>
<path d="M37 22 L58.6 22 L58.6 37 L40 37 Z" fill="#cfc9e6"/>
<ellipse cx="48" cy="20" rx="11" ry="5.5" fill="#f6f4f2"/>
<path d="M38 20 L44 19 L47 25 L40 25 Z" fill="#e89020"/>
<path d="M52 18 L58.6 18 L58.6 25 L53 25 Z" fill="#e88818"/>
<path d="M28 33 L38 30 L40 37 L27 37 Z" fill="#d88820"/>
<ellipse cx="16" cy="29" rx="9" ry="5" fill="#f4f2f4"/>
<ellipse cx="21" cy="6" rx="4" ry="1.5" fill="#202030" transform="rotate(15 21 6)"/>
<ellipse cx="49" cy="12" rx="4" ry="1.5" fill="#202030" transform="rotate(-20 49 12)"/>
<ellipse cx="23" cy="25.5" rx="4.5" ry="1.8" fill="#202030" transform="rotate(-20 23 25.5)"/>
<ellipse cx="49" cy="32" rx="3.5" ry="1" fill="#5048a0"/>
<rect x="7.5" y="31" width="1.2" height="6" fill="#b08030"/>
</g></svg>
<div class="c" style="left:98.25px;top:545.80px">Lavendeltörtchen</div>
<div class="c" style="left:483.75px;top:538.05px">Süßspeise /<br>Mehlspeise / Muffins</div>
<svg class="st" style="left:756.10px;top:543.35px" width="20.25" height="19.9" viewBox="0 0 18 18" preserveAspectRatio="none"><path d="M9 1.2 L11.2 6.6 L17 7 L12.5 10.8 L14 16.4 L9 13.3 L4 16.4 L5.5 10.8 L1 7 L6.8 6.6 Z" fill="#eeeeeb"/><circle cx="9" cy="9.1" r="1.05" fill="#d2d2d2"/></svg><svg class="st" style="left:774.82px;top:543.35px" width="20.25" height="19.9" viewBox="0 0 18 18" preserveAspectRatio="none"><path d="M9 1.2 L11.2 6.6 L17 7 L12.5 10.8 L14 16.4 L9 13.3 L4 16.4 L5.5 10.8 L1 7 L6.8 6.6 Z" fill="#eeeeeb"/><circle cx="9" cy="9.1" r="1.05" fill="#d2d2d2"/></svg><svg class="st" style="left:793.54px;top:543.35px" width="20.25" height="19.9" viewBox="0 0 18 18" preserveAspectRatio="none"><path d="M9 1.2 L11.2 6.6 L17 7 L12.5 10.8 L14 16.4 L9 13.3 L4 16.4 L5.5 10.8 L1 7 L6.8 6.6 Z" fill="#eeeeeb"/><circle cx="9" cy="9.1" r="1.05" fill="#d2d2d2"/></svg><svg class="st" style="left:812.26px;top:543.35px" width="20.25" height="19.9" viewBox="0 0 18 18" preserveAspectRatio="none"><path d="M9 1.2 L11.2 6.6 L17 7 L12.5 10.8 L14 16.4 L9 13.3 L4 16.4 L5.5 10.8 L1 7 L6.8 6.6 Z" fill="#eeeeeb"/><circle cx="9" cy="9.1" r="1.05" fill="#d2d2d2"/></svg><svg class="st" style="left:830.98px;top:543.35px" width="20.25" height="19.9" viewBox="0 0 18 18" preserveAspectRatio="none"><path d="M9 1.2 L11.2 6.6 L17 7 L12.5 10.8 L14 16.4 L9 13.3 L4 16.4 L5.5 10.8 L1 7 L6.8 6.6 Z" fill="#eeeeeb"/><circle cx="9" cy="9.1" r="1.05" fill="#d2d2d2"/></svg>
<div class="c" style="left:862.00px;top:545.80px">Active Beauty Magazin</div>
<div class="c" style="left:1009.25px;top:545.80px">10 minutes</div>
<div class="c" style="left:1119.00px;top:545.80px">15 minutes</div>
<svg style="left:41px;top:573.62px" width="44" height="37" viewBox="0 0 44 37">
<rect width="44" height="37" fill="#c4ccda"/>
<g filter="url(#b2)">
<rect x="0" y="0" width="44" height="8" fill="#b0bace"/>
<rect x="0" y="31" width="44" height="6" fill="#a08070"/>
<ellipse cx="22" cy="22" rx="22" ry="10.5" fill="#eceef4"/>
<ellipse cx="15" cy="11" rx="6" ry="4" fill="#ece4d4"/>
<path d="M8 21 L20 9 L38 14 L36 21 L24 28 L9 25 Z" fill="#7a2c22"/>
<path d="M20 9 L38 14 L34 17 L18 12.5 Z" fill="#4a2018"/>
<path d="M11 20 L22 14 L30 18 L20 24 Z" fill="#a03c30"/>
<path d="M36 22 L40 20 L33 34 L30 33 Z" fill="#f6f6fa"/>
</g></svg>
<div class="c" style="left:98.25px;top:585.67px">Nussige Schoko-Brownies</div>
<div class="c" style="left:483.75px;top:585.67px">Süßspeise / Mehlspeise</div>
<svg class="st" style="left:756.10px;top:582.73px" width="20.25" height="19.9" viewBox="0 0 18 18" preserveAspectRatio="none"><path d="M9 1.2 L11.2 6.6 L17 7 L12.5 10.8 L14 16.4 L9 13.3 L4 16.4 L5.5 10.8 L1 7 L6.8 6.6 Z" fill="#fafaf6"/><circle cx="9" cy="9.1" r="1.05" fill="#c8c8c8"/></svg><svg class="st" style="left:774.82px;top:582.73px" width="20.25" height="19.9" viewBox="0 0 18 18" preserveAspectRatio="none"><path d="M9 1.2 L11.2 6.6 L17 7 L12.5 10.8 L14 16.4 L9 13.3 L4 16.4 L5.5 10.8 L1 7 L6.8 6.6 Z" fill="#fafaf6"/><circle cx="9" cy="9.1" r="1.05" fill="#c8c8c8"/></svg><svg class="st" style="left:793.54px;top:582.73px" width="20.25" height="19.9" viewBox="0 0 18 18" preserveAspectRatio="none"><path d="M9 1.2 L11.2 6.6 L17 7 L12.5 10.8 L14 16.4 L9 13.3 L4 16.4 L5.5 10.8 L1 7 L6.8 6.6 Z" fill="#fafaf6"/><circle cx="9" cy="9.1" r="1.05" fill="#c8c8c8"/></svg><svg class="st" style="left:812.26px;top:582.73px" width="20.25" height="19.9" viewBox="0 0 18 18" preserveAspectRatio="none"><path d="M9 1.2 L11.2 6.6 L17 7 L12.5 10.8 L14 16.4 L9 13.3 L4 16.4 L5.5 10.8 L1 7 L6.8 6.6 Z" fill="#fafaf6"/><circle cx="9" cy="9.1" r="1.05" fill="#c8c8c8"/></svg><svg class="st" style="left:830.98px;top:582.73px" width="20.25" height="19.9" viewBox="0 0 18 18" preserveAspectRatio="none"><path d="M9 1.2 L11.2 6.6 L17 7 L12.5 10.8 L14 16.4 L9 13.3 L4 16.4 L5.5 10.8 L1 7 L6.8 6.6 Z" fill="#fafaf6"/><circle cx="9" cy="9.1" r="1.05" fill="#c8c8c8"/></svg>
<div class="c" style="left:862.00px;top:585.67px">Active Beauty Magazin</div>
<div class="c" style="left:1009.25px;top:585.67px">10 minutes</div>
<div class="c" style="left:1119.00px;top:585.67px">½ hour</div>
<div class="rg" style="top:611.75px;height:39.5px"></div>
<svg style="left:41.8px;top:613.00px" width="42.4" height="37" viewBox="0 0 42.4 37">
<rect width="42.4" height="37" fill="#ece8f0"/>
<g filter="url(#b2)">
<path d="M0 26 L18 22 L22 37 L0 37 Z" fill="#d8a824"/>
<path d="M28 30 L42.4 26 L42.4 37 L24 37 Z" fill="#cca458"/>
<path d="M4 4.5 L19 1.5 L40 20 L36 30 L21 34 Z" fill="#552814"/>
<path d="M6.5 5.5 L18 3 L38 20 L22 25.5 Z" fill="#d98a38"/>
<path d="M22 26 L37 21 L35 29 L22 33 Z" fill="#80401f"/>
<path d="M12 4 L20 4.5 L28 13 L30 20 L25 19.5 L19 12 Z" fill="#f4cc58"/>
<path d="M8 8 L14 7 L20 16 L17 18 Z" fill="#e8a448"/>
</g>
<rect x="0" y="22" width="20" height="15" fill="#f4e6a8" filter="url(#sp)" opacity=".6"/>
</svg>
<div class="c" style="left:98.25px;top:624.55px">Zitronenkuchen</div>
<div class="c" style="left:483.75px;top:616.80px">Süßspeise /<br>Mehlspeise / Kuchen</div>
<svg class="st" style="left:756.10px;top:622.10px" width="20.25" height="19.9" viewBox="0 0 18 18" preserveAspectRatio="none"><path d="M9 1.2 L11.2 6.6 L17 7 L12.5 10.8 L14 16.4 L9 13.3 L4 16.4 L5.5 10.8 L1 7 L6.8 6.6 Z" fill="#eeeeeb"/><circle cx="9" cy="9.1" r="1.05" fill="#d2d2d2"/></svg><svg class="st" style="left:774.82px;top:622.10px" width="20.25" height="19.9" viewBox="0 0 18 18" preserveAspectRatio="none"><path d="M9 1.2 L11.2 6.6 L17 7 L12.5 10.8 L14 16.4 L9 13.3 L4 16.4 L5.5 10.8 L1 7 L6.8 6.6 Z" fill="#eeeeeb"/><circle cx="9" cy="9.1" r="1.05" fill="#d2d2d2"/></svg><svg class="st" style="left:793.54px;top:622.10px" width="20.25" height="19.9" viewBox="0 0 18 18" preserveAspectRatio="none"><path d="M9 1.2 L11.2 6.6 L17 7 L12.5 10.8 L14 16.4 L9 13.3 L4 16.4 L5.5 10.8 L1 7 L6.8 6.6 Z" fill="#eeeeeb"/><circle cx="9" cy="9.1" r="1.05" fill="#d2d2d2"/></svg><svg class="st" style="left:812.26px;top:622.10px" width="20.25" height="19.9" viewBox="0 0 18 18" preserveAspectRatio="none"><path d="M9 1.2 L11.2 6.6 L17 7 L12.5 10.8 L14 16.4 L9 13.3 L4 16.4 L5.5 10.8 L1 7 L6.8 6.6 Z" fill="#eeeeeb"/><circle cx="9" cy="9.1" r="1.05" fill="#d2d2d2"/></svg><svg class="st" style="left:830.98px;top:622.10px" width="20.25" height="19.9" viewBox="0 0 18 18" preserveAspectRatio="none"><path d="M9 1.2 L11.2 6.6 L17 7 L12.5 10.8 L14 16.4 L9 13.3 L4 16.4 L5.5 10.8 L1 7 L6.8 6.6 Z" fill="#eeeeeb"/><circle cx="9" cy="9.1" r="1.05" fill="#d2d2d2"/></svg>
<div class="c" style="left:862.00px;top:624.55px">Active Beauty Magazin</div>
<div class="c" style="left:1009.25px;top:624.55px">10 minutes</div>
<div class="c" style="left:1119.00px;top:624.55px">40 minutes</div>
<svg style="left:49.4px;top:660.00px" width="27.2" height="37" viewBox="0 0 27.2 37">
<rect width="27.2" height="37" fill="#c6cfdc"/><rect width="3" height="37" fill="#a8b0bc" filter="url(#b2)"/>
<g filter="url(#b2)">
<rect x="0" y="0" width="27.2" height="8" fill="#b0bccc"/>
<ellipse cx="15" cy="30" rx="9" ry="5" fill="#e0c890"/>
<ellipse cx="15" cy="28" rx="6.5" ry="5" fill="#ecd080"/>
<ellipse cx="15" cy="15" rx="4.5" ry="6" fill="#f0d070"/>
<ellipse cx="15" cy="22" rx="5.5" ry="2.5" fill="#5a3018"/>
<ellipse cx="17" cy="13" rx="2" ry="2.5" fill="#e09030"/>
<path d="M16.5 9 L20 1.5 L21 2 L18 9.5 Z" fill="#3a2010"/>
<ellipse cx="11" cy="17" rx="1.5" ry="1.5" fill="#4a3018"/>
</g>
<rect x="11" y="36" width="6" height="1" fill="#222"/>
</svg>
<div class="c" style="left:98.25px;top:656.05px">Mandelbirne mit<br>Schokoladenmousse und<br>Pistazieneis</div>
<div class="c" style="left:483.75px;top:671.55px">Süßspeise / Dessert</div>
<svg class="st" style="left:756.10px;top:669.10px" width="20.25" height="19.9" viewBox="0 0 18 18" preserveAspectRatio="none"><path d="M9 1.2 L11.2 6.6 L17 7 L12.5 10.8 L14 16.4 L9 13.3 L4 16.4 L5.5 10.8 L1 7 L6.8 6.6 Z" fill="#fafaf6"/><circle cx="9" cy="9.1" r="1.05" fill="#c8c8c8"/></svg><svg class="st" style="left:774.82px;top:669.10px" width="20.25" height="19.9" viewBox="0 0 18 18" preserveAspectRatio="none"><path d="M9 1.2 L11.2 6.6 L17 7 L12.5 10.8 L14 16.4 L9 13.3 L4 16.4 L5.5 10.8 L1 7 L6.8 6.6 Z" fill="#fafaf6"/><circle cx="9" cy="9.1" r="1.05" fill="#c8c8c8"/></svg><svg class="st" style="left:793.54px;top:669.10px" width="20.25" height="19.9" viewBox="0 0 18 18" preserveAspectRatio="none"><path d="M9 1.2 L11.2 6.6 L17 7 L12.5 10.8 L14 16.4 L9 13.3 L4 16.4 L5.5 10.8 L1 7 L6.8 6.6 Z" fill="#fafaf6"/><circle cx="9" cy="9.1" r="1.05" fill="#c8c8c8"/></svg><svg class="st" style="left:812.26px;top:669.10px" width="20.25" height="19.9" viewBox="0 0 18 18" preserveAspectRatio="none"><path d="M9 1.2 L11.2 6.6 L17 7 L12.5 10.8 L14 16.4 L9 13.3 L4 16.4 L5.5 10.8 L1 7 L6.8 6.6 Z" fill="#fafaf6"/><circle cx="9" cy="9.1" r="1.05" fill="#c8c8c8"/></svg><svg class="st" style="left:830.98px;top:669.10px" width="20.25" height="19.9" viewBox="0 0 18 18" preserveAspectRatio="none"><path d="M9 1.2 L11.2 6.6 L17 7 L12.5 10.8 L14 16.4 L9 13.3 L4 16.4 L5.5 10.8 L1 7 L6.8 6.6 Z" fill="#fafaf6"/><circle cx="9" cy="9.1" r="1.05" fill="#c8c8c8"/></svg>
<div class="c" style="left:862.00px;top:671.55px">Active Beauty Magazin</div>
<div class="vl" style="left:93.25px"></div>
<div class="vl" style="left:478.75px"></div>
<div class="vl" style="left:625.75px"></div>
<div class="vl" style="left:754.25px"></div>
<div class="vl" style="left:857px"></div>
<div class="vl" style="left:1004.25px"></div>
<div class="vl" style="left:1114px"></div>
<div id="sbar"></div>
<div id="thumb"></div>
<svg style="left:1209px;top:139.5px" width="9" height="7" viewBox="0 0 9 7"><path d="M1.3 5.2 L4.4 2.1 L7.5 5.2" fill="none" stroke="#444" stroke-width="1.45"/></svg>
<svg style="left:1209px;top:687px" width="9" height="7" viewBox="0 0 9 7"><path d="M1.3 1.8 L4.4 4.9 L7.5 1.8" fill="none" stroke="#444" stroke-width="1.45"/></svg>
</div>
</body></html>
